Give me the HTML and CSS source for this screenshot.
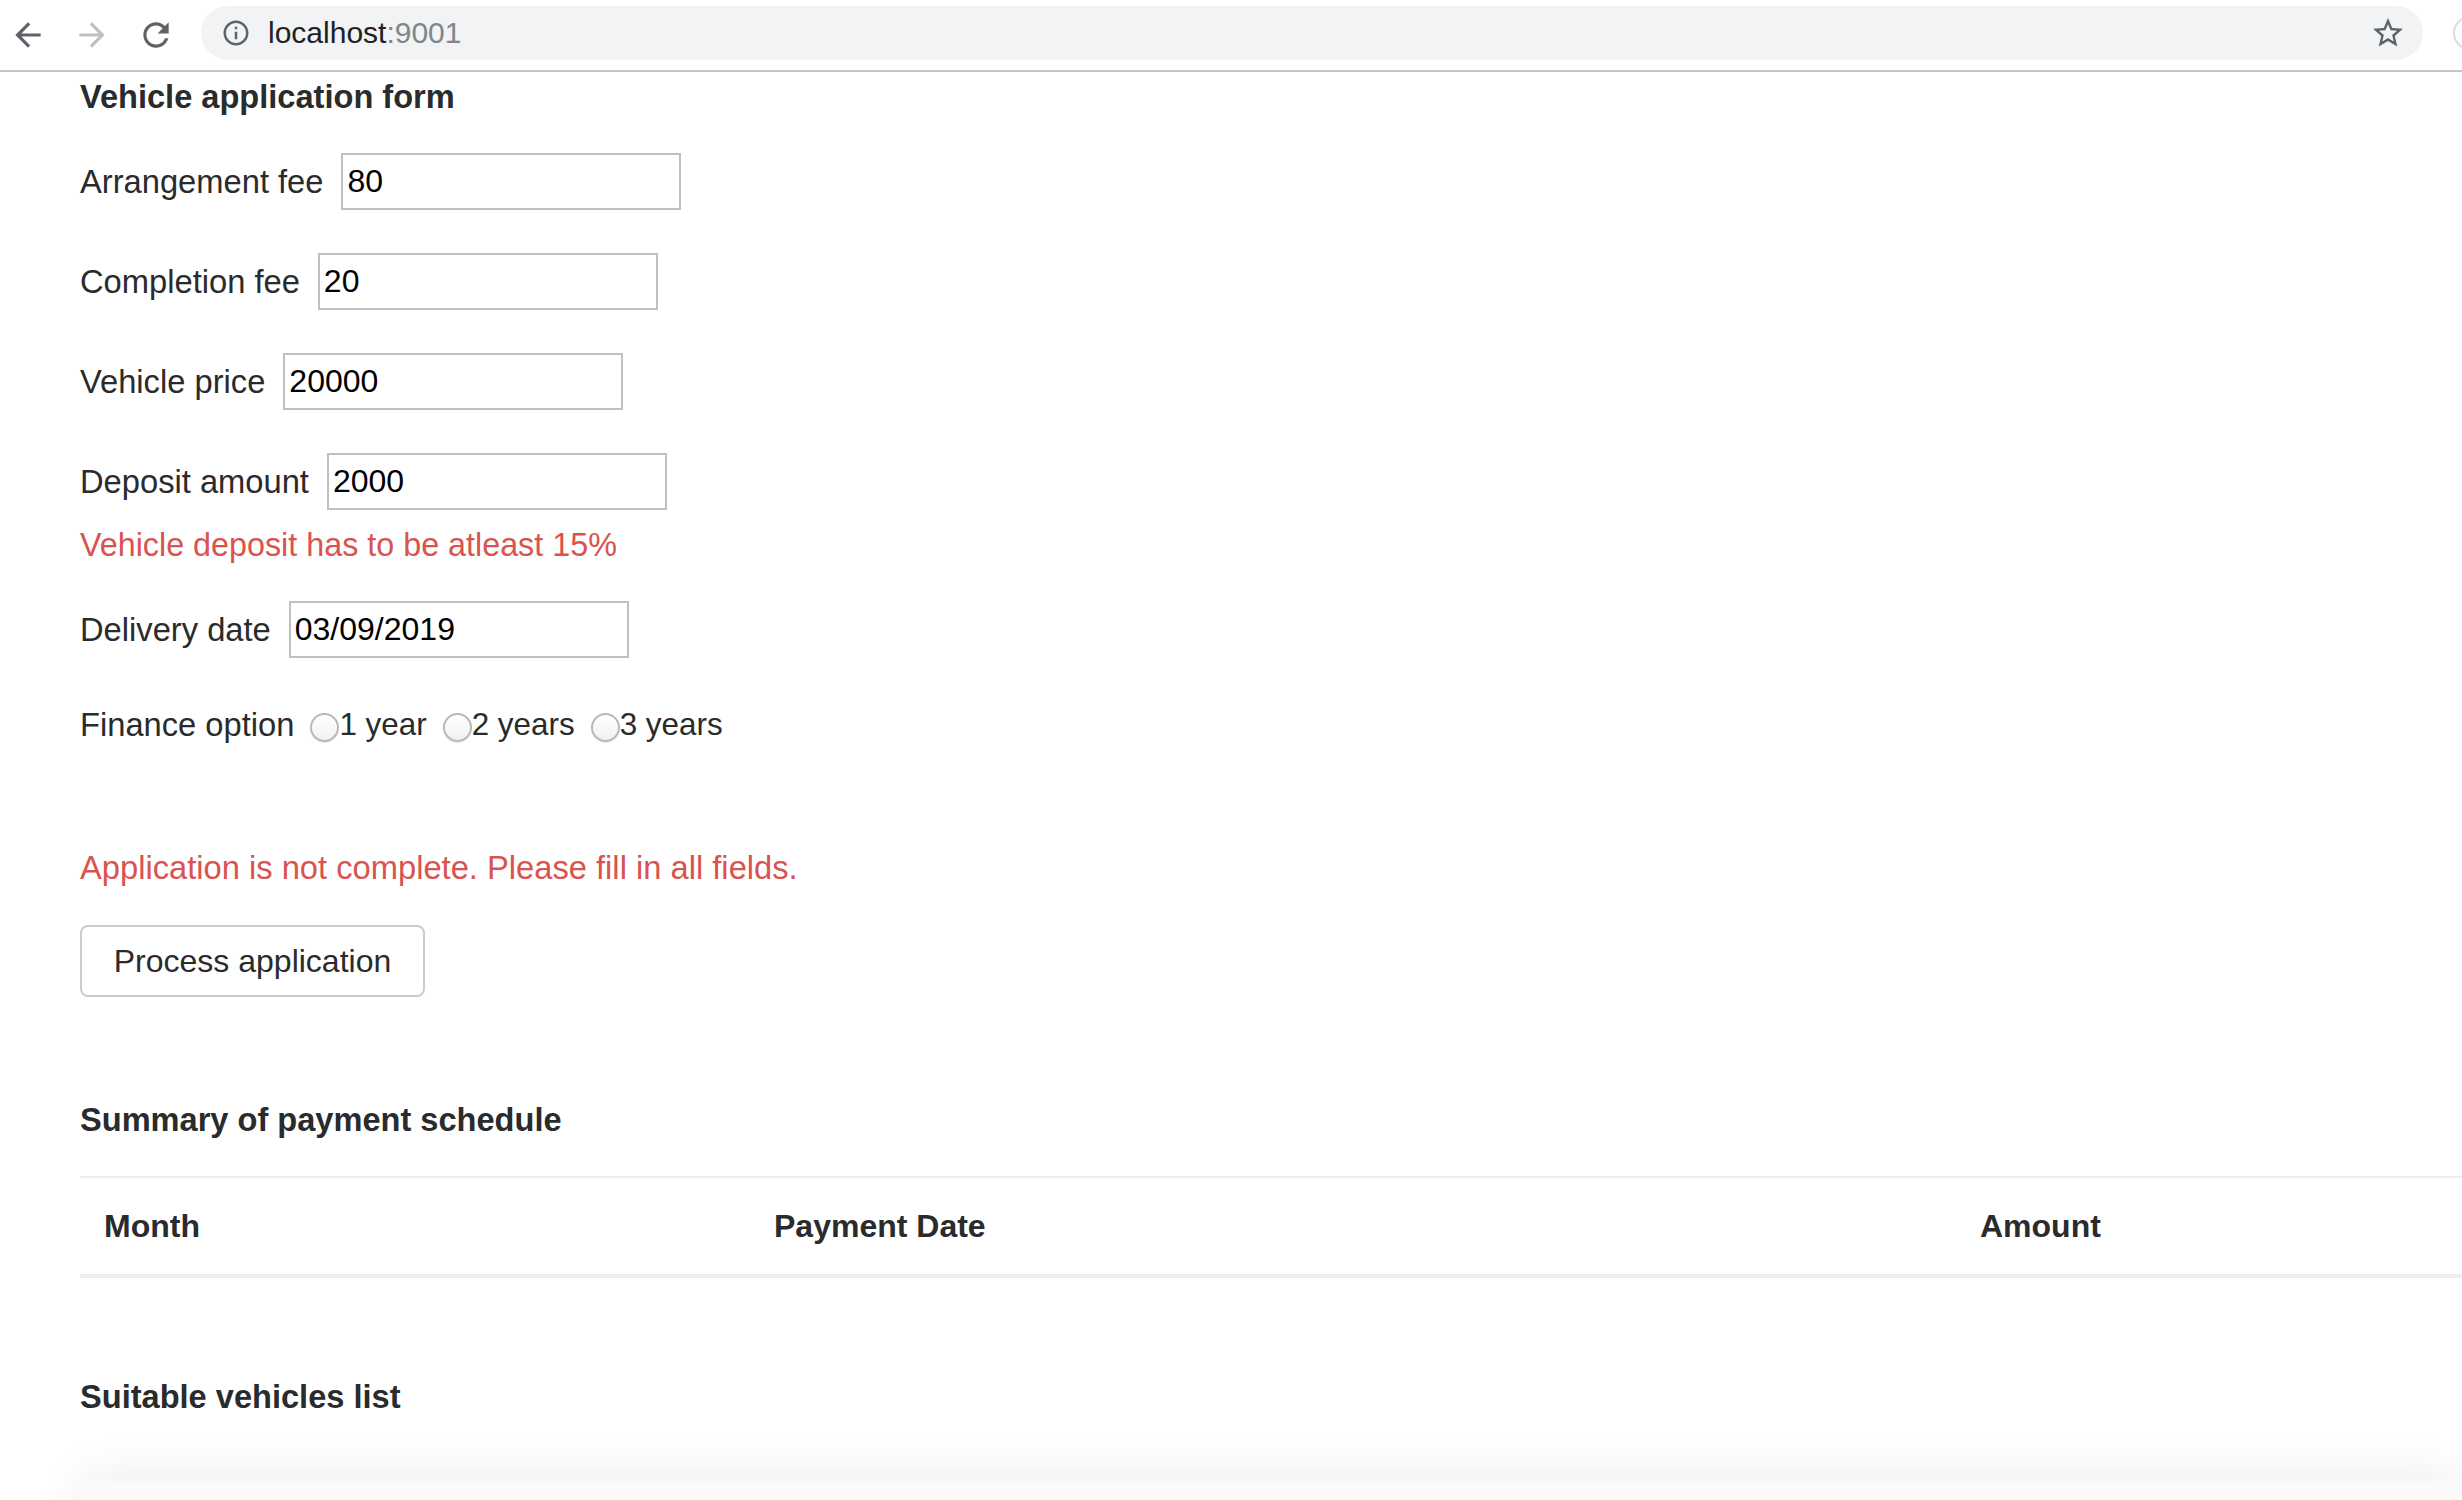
FILE: index.html
```html
<!DOCTYPE html>
<html lang="en">
<head>
<meta charset="utf-8">
<title>Vehicle application</title>
<link rel="stylesheet" href="styles.css">
</head>
<body>
<header class="toolbar">
  <div class="nav-btn">
    <svg viewBox="0 0 24 24" class="icon dark"><path d="M20 11H7.83l5.59-5.59L12 4l-8 8 8 8 1.41-1.41L7.83 13H20v-2z"/></svg>
  </div>
  <div class="nav-btn">
    <svg viewBox="0 0 24 24" class="icon light"><path d="M12 4l-1.41 1.41L16.17 11H4v2h12.17l-5.58 5.59L12 20l8-8z"/></svg>
  </div>
  <div class="nav-btn">
    <svg viewBox="0 0 24 24" class="icon dark"><path d="M17.65 6.35C16.2 4.9 14.21 4 12 4c-4.42 0-7.99 3.58-7.99 8s3.57 8 7.99 8c3.73 0 6.84-2.55 7.73-6h-2.08c-.82 2.33-3.04 4-5.65 4-3.31 0-6-2.690-6-6s2.69-6 6-6c1.66 0 3.14.69 4.22 1.78L13 11h7V4l-2.35 2.35z"/></svg>
  </div>
  <div class="omnibox">
    <svg viewBox="0 0 24 24" class="info-icon"><path d="M11 7h2v2h-2zm0 4h2v6h-2zm1-9C6.48 2 2 6.48 2 12s4.48 10 10 10 10-4.48 10-10S17.52 2 12 2zm0 18c-4.41 0-8-3.59-8-8s3.59-8 8-8 8 3.59 8 8-3.59 8-8 8z"/></svg>
    <span class="url"><span class="host">localhost</span><span class="port">:9001</span></span>
    <svg viewBox="0 0 24 24" class="star-icon"><path d="M22 9.24l-7.19-.62L12 2 9.19 8.63 2 9.24l5.46 4.73L5.82 21 12 17.27 18.18 21l-1.63-7.03L22 9.24zM12 15.4l-3.76 2.27 1-4.28-3.32-2.88 4.38-.38L12 6.1l1.71 4.04 4.38.38-3.32 2.88 1 4.28L12 15.4z"/></svg>
  </div>
  <div class="avatar"></div>
</header>

<main class="page">
  <h2 class="title form-title">Vehicle application form</h2>

  <div class="field-row">
    <label class="field-label">Arrangement fee</label>
    <input class="text-input" type="text" value="80">
  </div>
  <div class="field-row">
    <label class="field-label">Completion fee</label>
    <input class="text-input" type="text" value="20">
  </div>
  <div class="field-row">
    <label class="field-label">Vehicle price</label>
    <input class="text-input" type="text" value="20000">
  </div>
  <div class="field-row has-error">
    <label class="field-label">Deposit amount</label>
    <input class="text-input" type="text" value="2000">
  </div>
  <p class="error field-error">Vehicle deposit has to be atleast 15%</p>
  <div class="field-row">
    <label class="field-label">Delivery date</label>
    <input class="text-input" type="text" value="03/09/2019">
  </div>
  <div class="finance-row">
    <span class="finance-label">Finance option</span>
    <label class="option"><input class="radio" type="radio" name="finance">1 year</label>
    <label class="option"><input class="radio" type="radio" name="finance">2 years</label>
    <label class="option"><input class="radio" type="radio" name="finance">3 years</label>
  </div>

  <p class="error form-error">Application is not complete. Please fill in all fields.</p>
  <button class="btn" type="button">Process application</button>

  <h2 class="title summary-title">Summary of payment schedule</h2>
  <table class="schedule">
    <colgroup>
      <col class="col-month">
      <col class="col-date">
      <col>
    </colgroup>
    <thead>
      <tr><th>Month</th><th>Payment Date</th><th>Amount</th></tr>
    </thead>
    <tbody></tbody>
  </table>

  <h2 class="title vehicles-title">Suitable vehicles list</h2>
  <div class="vehicle-card"></div>
</main>
</body>
</html>
```

FILE: styles.css
```css
html, body {
  margin: 0;
  padding: 0;
  overflow: hidden;
  background: #fff;
}

body {
  font-family: "Liberation Sans", Arial, sans-serif;
  color: #292b2c;
  font-size: 32.7px;
  line-height: 48px;
}

/* Browser toolbar */
.toolbar {
  height: 70px;
  border-bottom: 2px solid #c6c6c6;
  display: flex;
  align-items: center;
  padding-left: 9px;
  overflow: hidden;
}

.nav-btn {
  flex: none;
  width: 38px;
  height: 38px;
  margin-right: 26px;
  display: flex;
  align-items: center;
  justify-content: center;
}

.icon { width: 38px; height: 38px; }
.icon.dark { fill: #5f6368; }
.icon.light { fill: #bdc1c6; }

.omnibox {
  flex: none;
  width: 2222px;
  height: 54px;
  margin-top: -4px;
  background: #f1f3f4;
  border-radius: 27px;
  display: flex;
  align-items: center;
  padding-left: 20px;
  padding-right: 17px;
  box-sizing: border-box;
}

.info-icon { width: 30px; height: 30px; fill: #5f6368; flex: none; }
.star-icon { width: 36px; height: 36px; fill: #5f6368; margin-left: auto; flex: none; }

.url {
  margin-left: 17px;
  font-size: 30px;
  line-height: 36px;
}
.host { color: #202124; }
.port { color: #80868b; }

.avatar {
  flex: none;
  width: 30px;
  height: 30px;
  margin-left: 30px;
  margin-top: -4px;
  border: 2px solid #dadce0;
  border-radius: 50%;
}

/* Page */
.page {
  padding-left: 80px;
}

.title {
  font-size: 32.6px;
  font-weight: 700;
  line-height: 48px;
  margin: 0;
  color: #292b2c;
}

.form-title {
  margin-top: 1px;
  margin-bottom: 32px;
}

.field-row {
  display: flex;
  align-items: center;
  height: 57px;
  margin-bottom: 43px;
}
.field-row.has-error { margin-bottom: 11px; }

.field-label {
  margin-right: 18px;
  white-space: nowrap;
}

.text-input {
  width: 340px;
  height: 57px;
  box-sizing: border-box;
  border: 2px solid #bfbfbf;
  padding: 0 4px;
  font-family: "Liberation Sans", Arial, sans-serif;
  font-size: 32px;
  color: #000;
  background: #fff;
  outline: none;
  margin: 0;
}

.error {
  color: #d9534f;
  margin: 0;
}
.field-error { margin-bottom: 32px; font-size: 32.3px; }

.finance-row {
  display: flex;
  align-items: center;
  height: 48px;
  margin-bottom: 95px;
}

.option {
  display: flex;
  align-items: center;
  margin-left: 16px;
  font-size: 31.4px;
}

.radio {
  -webkit-appearance: none;
  appearance: none;
  flex: none;
  width: 29px;
  height: 29px;
  margin: 4px 0 0 0;
  border: 2px solid #b9b9b9;
  border-radius: 50%;
  background: linear-gradient(#ffffff, #f1f1f1);
  box-shadow: 0 1px 1px rgba(0,0,0,0.08);
  box-sizing: border-box;
}

.form-error { margin-bottom: 33px; }

.btn {
  display: block;
  width: 345px;
  height: 72px;
  border: 2px solid #cccccc;
  border-radius: 8px;
  background: #fff;
  color: #292b2c;
  font-family: "Liberation Sans", Arial, sans-serif;
  font-size: 32px;
  padding: 0;
  margin: 0 0 99px 0;
}

.summary-title { margin-bottom: 32px; }

.schedule {
  width: 100%;
  border-collapse: collapse;
  table-layout: fixed;
}
.col-month { width: 670px; }
.col-date { width: 1206px; }

.schedule th {
  text-align: left;
  font-weight: 700;
  font-size: 32px;
  padding: 24px;
  line-height: 48px;
  border-top: 2px solid #eceeef;
  border-bottom: 4px solid #eceeef;
}

.vehicles-title {
  margin-top: 95px;
}

.vehicle-card {
  margin-top: 60px;
  height: 300px;
  background: #fafafa;
  box-shadow: 0 -6px 44px rgba(0,0,0,0.07);
}
```
